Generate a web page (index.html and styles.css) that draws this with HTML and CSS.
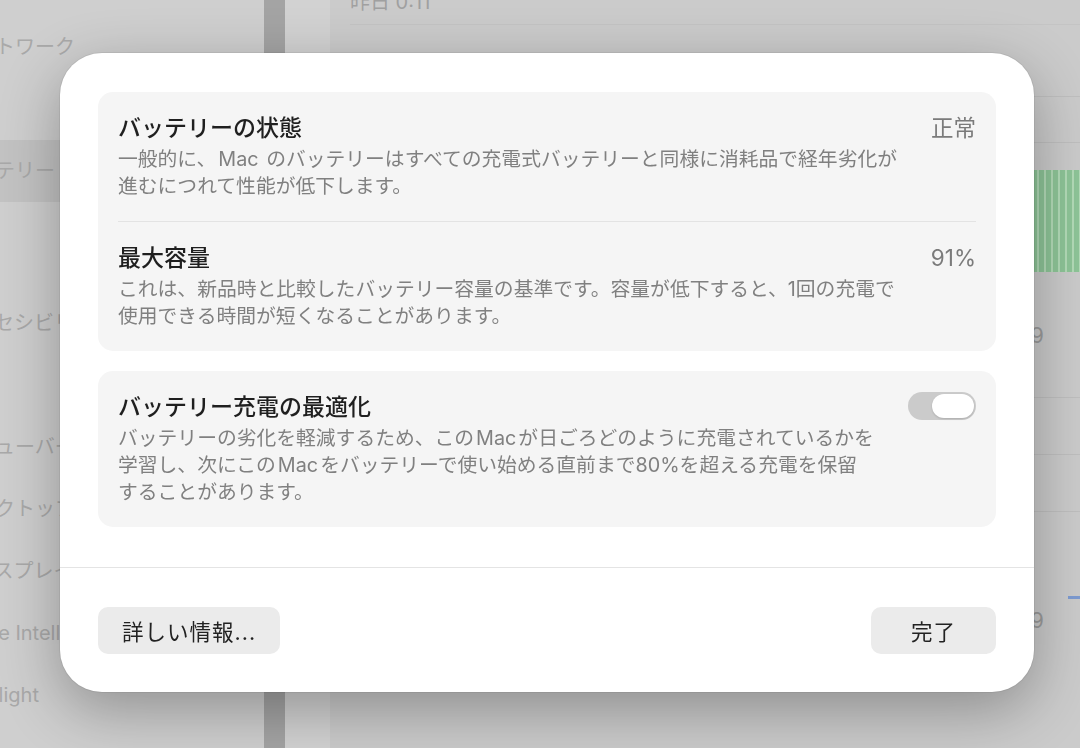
FILE: index.html
```html
<!DOCTYPE html>
<html lang="ja">
<head>
    <meta charset="UTF-8">
    <meta name="viewport" content="width=device-width, initial-scale=1.0">
    <title>バッテリー</title>
    <link rel="stylesheet" href="styles.css">
</head>
<body>
    <div class="window">
        <nav class="sidebar">
            <div class="nav-item">ネットワーク</div>
            <div class="nav-item">VPN</div>
            <div class="nav-item selected">バッテリー</div>
            <div class="nav-group">
                <div class="nav-item">一般</div>
                <div class="nav-item">アクセシビリティ</div>
                <div class="nav-item">外観</div>
                <div class="nav-item">メニューバー</div>
                <div class="nav-item">デスクトップとDock</div>
                <div class="nav-item">ディスプレイ</div>
                <div class="nav-item">Apple Intelligence</div>
                <div class="nav-item">Spotlight</div>
            </div>
        </nav>
        <div class="scrollbar"></div>
        <main class="content">
            <div class="panel">
                <div class="panel-row first">昨日 0:11</div>
                <div class="panel-row"></div>
                <div class="panel-row short"></div>
                <div class="chart">
                    <div class="bars"></div>
                </div>
                <div class="axis">9</div>
                <div class="panel-row thin"></div>
                <div class="panel-row thin"></div>
                <div class="axis low">
                    <span class="dash"></span>
                    <span>9</span>
                </div>
            </div>
        </main>
    </div>

    <div class="backdrop">
        <section class="sheet">
            <div class="group">
                <div class="row">
                    <div class="row-text">
                        <h2>バッテリーの状態</h2>
                        <p>一般的に、<span class="en">Mac</span> のバッテリーはすべての充電式バッテリーと同様に消耗品で経年劣化が<br>進むにつれて性能が低下します。</p>
                    </div>
                    <span class="value">正常</span>
                </div>
                <div class="row">
                    <div class="row-text">
                        <h2>最大容量</h2>
                        <p>これは、新品時と比較したバッテリー容量の基準です。容量が低下すると、1回の充電で<br>使用できる時間が短くなることがあります。</p>
                    </div>
                    <span class="value">91%</span>
                </div>
            </div>
            <div class="group">
                <div class="row">
                    <div class="row-text">
                        <h2>バッテリー充電の最適化</h2>
                        <p>バッテリーの劣化を軽減するため、この<span class="en">Mac</span>が日ごろどのように充電されているかを<br>学習し、次にこの<span class="en">Mac</span>をバッテリーで使い始める直前まで80%を超える充電を保留<br>することがあります。</p>
                    </div>
                    <span class="switch"><span class="knob"></span></span>
                </div>
            </div>
            <footer class="sheet-footer">
                <button class="btn">詳しい情報...</button>
                <button class="btn">完了</button>
            </footer>
        </section>
    </div>
</body>
</html>
```

FILE: styles.css
```css
* {
    box-sizing: border-box;
}
html, body {
    margin: 0;
    height: 100%;
    overflow: hidden;
}
body {
    font-family: Inter, "Noto Sans CJK JP", sans-serif;
    background-color: #cdcdcd;
    color: #222;
}

/* ventana de fondo (atenuada) */
.window {
    display: flex;
    height: 100%;
}
.sidebar {
    width: 264px;
    flex-shrink: 0;
    overflow: hidden;
    background-color: #cfcfcf;
    padding-top: 16px;
}
.nav-item {
    height: 62px;
    line-height: 62px;
    margin-left: -45px;
    margin-right: 160px;
    white-space: nowrap;
    overflow: hidden;
    font-size: 20px;
    color: #a9a9a9;
}
.nav-item.selected {
    background-color: #c3c3c3;
    border-radius: 10px;
}
.nav-group {
    margin-top: 28px;
}
.scrollbar {
    width: 21px;
    flex-shrink: 0;
    background-color: #a4a4a4;
}
.content {
    flex: 1;
    background-color: #d2d2d2;
    padding-left: 45px;
}
.panel {
    background-color: #cbcbcb;
    height: 100%;
    padding-left: 20px;
}
.panel-row {
    height: 64px;
    border-bottom: 1px solid #bfbfbf;
}
.panel-row.first {
    height: 33px;
    font-size: 20px;
    line-height: 20px;
    color: #a0a0a0;
    transform: translateY(-8px);
    border-bottom-color: #c4c4c4;
}
.panel-row.short {
    height: 46px;
}
.panel-row.thin {
    height: 57px;
}
.chart {
    height: 129px;
    padding-top: 27px;
    display: flex;
    justify-content: flex-end;
}
.bars {
    width: 90px;
    height: 102px;
    background: repeating-linear-gradient(90deg, #8ec598 0 5px, #b3dbb8 5px 7px);
}
.axis {
    height: 126px;
    padding-right: 36px;
    font-size: 22px;
    color: #9c9c9c;
    display: flex;
    justify-content: flex-end;
    align-items: center;
    border-bottom: 1px solid #bfbfbf;
}
.axis.low {
    height: 130px;
    border-bottom: none;
    flex-direction: column;
    align-items: flex-end;
    justify-content: flex-start;
    padding-top: 84px;
    line-height: 26px;
}
.dash {
    width: 12px;
    height: 3px;
    margin-right: -36px;
    margin-bottom: 8px;
    background-color: #7d9bd1;
}

/* hoja modal */
.backdrop {
    position: fixed;
    inset: 0;
}
.sheet {
    position: absolute;
    left: 60px;
    top: 53px;
    width: 974px;
    height: 639px;
    background-color: #fff;
    border-radius: 42px;
    padding: 39px 38px 0;
    box-shadow: 0 0 0 1px rgba(0, 0, 0, 0.06), 0 18px 60px rgba(0, 0, 0, 0.3);
}
.group {
    background-color: #f5f5f5;
    border-radius: 15px;
    padding: 0 20px;
}
.group + .group {
    margin-top: 20px;
}
.row {
    display: flex;
    align-items: flex-start;
    gap: 16px;
    padding: 21px 0;
}
.row + .row {
    border-top: 1px solid #e3e3e3;
}
.row-text {
    flex: 1;
    min-width: 0;
}
.row h2 {
    margin: 0 0 3px;
    font-size: 23px;
    line-height: 30px;
    font-weight: 500;
    color: #1f1f1f;
}
.row p {
    margin: 0;
    font-size: 19.8px;
    line-height: 27px;
    color: #808080;
    white-space: nowrap;
}
.en {
    margin: 0 2px;
}
.value {
    font-size: 22.5px;
    line-height: 30px;
    color: #7b7b7b;
}
.switch {
    width: 68px;
    height: 28px;
    border-radius: 14px;
    background-color: #cbcbcb;
    padding: 2px;
    display: flex;
    justify-content: flex-end;
}
.knob {
    width: 42px;
    height: 24px;
    border-radius: 12px;
    background-color: #fff;
    box-shadow: 0 1px 2px rgba(0, 0, 0, 0.15);
}
.sheet-footer {
    margin: 40px -38px 0;
    border-top: 1px solid #e4e4e4;
    padding: 39px 38px 38px;
    display: flex;
    justify-content: space-between;
}
.btn {
    height: 47px;
    min-width: 125px;
    padding: 0 24px;
    border: none;
    border-radius: 10px;
    background-color: #ebebeb;
    font-family: Inter, "Noto Sans CJK JP", sans-serif;
    font-size: 21.5px;
    letter-spacing: 1px;
    color: #222;
}
```
